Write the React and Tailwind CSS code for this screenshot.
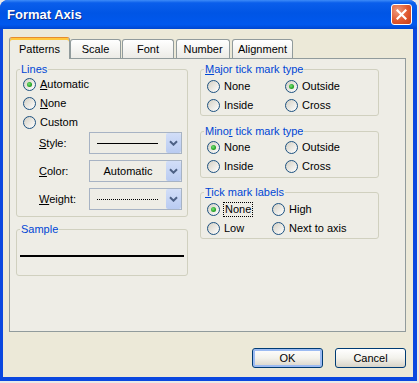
import React from 'react';

const PANEL = 'bg-[#EEEDE6]';

function Radio({ checked, children, focus }) {
  return (
    <div className="flex items-center h-[19px]">
      <span className="w-[13px] h-[13px] shrink-0 rounded-full border border-[#1C5180] bg-gradient-to-br from-[#D4D0C4] to-white flex items-center justify-center">
        {checked && (
          <span className="w-[5px] h-[5px] rounded-full bg-[radial-gradient(circle_at_40%_40%,#7BE07B_0%,#2BAA2B_55%,#167A16_100%)]"></span>
        )}
      </span>
      {focus ? (
        <span className="ml-[3px] px-[1px] border border-dotted border-black leading-[13px]">{children}</span>
      ) : (
        <span className="ml-[4px] leading-[13px]">{children}</span>
      )}
    </div>
  );
}

function Group({ label, className, children }) {
  return (
    <div className={`relative border border-[#D0D0BF] rounded-[3px] ${className}`}>
      <span className={`absolute left-[3px] -top-[7px] px-[1px] leading-[13px] text-[#0046D5] ${PANEL}`}>{label}</span>
      {children}
    </div>
  );
}

function Combo({ children }) {
  return (
    <div className="w-[93px] h-[22px] border border-[#A7B3C4] flex items-stretch">
      <div className="flex-1 flex items-center">{children}</div>
      <div className="w-[15px] bg-gradient-to-b from-[#D2DEF8] to-[#B9CBF1] rounded-[2px] flex items-center justify-center">
        <svg width="9" height="6" viewBox="0 0 9 6">
          <path d="M1 1.2 L4.5 4.7 L8 1.2" fill="none" stroke="#4D6185" strokeWidth="2" />
        </svg>
      </div>
    </div>
  );
}

function Tab({ children, selected, className }) {
  if (selected) {
    return (
      <div className={`relative z-10 h-[22px] -mb-[1px] border border-b-0 border-[#919B9C] border-t-[#E68B2C] rounded-t-[3px] shadow-[inset_0_2px_0_#FFC73C] ${PANEL} flex items-center justify-center pt-[2px] ${className}`}>
        {children}
      </div>
    );
  }
  return (
    <div className={`h-[19px] border border-b-0 border-[#919B9C] rounded-t-[3px] bg-gradient-to-b from-white to-[#ECEBE6] flex items-center justify-center ${className}`}>
      {children}
    </div>
  );
}

function Button({ children, isDefault }) {
  return (
    <div className={`w-[71px] h-[20px] rounded-[3px] border border-[#003C74] bg-gradient-to-b from-white via-[#F3F2EC] to-[#D8D4C8] flex items-center justify-center ${isDefault ? 'shadow-[inset_0_0_0_2px_#9CBBF2]' : ''}`}>
      {children}
    </div>
  );
}

export default function App() {
  return (
    <div className="w-[419px] h-[383px] bg-[#E9E9E9] font-['Liberation_Sans',Arial,sans-serif] text-[11px] text-black">
      <div className="w-[417px] h-[381px] rounded-t-[8px] overflow-hidden bg-[#0A47DF] flex flex-col">

        {/* title bar */}
        <div className="h-[29px] shrink-0 flex items-center pl-[7px] pr-[5px] bg-[linear-gradient(180deg,#3D8BF8_0%,#0A5EEB_10%,#0055E5_45%,#0058EE_85%,#0046D0_100%)]">
          <span className="text-white font-bold text-[13px] [text-shadow:1px_1px_#0A2A8C]">Format Axis</span>
          <div className="ml-auto w-[21px] h-[21px] rounded-[3px] border border-white bg-[radial-gradient(circle_at_30%_30%,#EE9A7E_0%,#E0582F_55%,#C83D17_100%)] flex items-center justify-center">
            <svg width="11" height="11" viewBox="0 0 11 11">
              <path d="M1.5 1.5 L9.5 9.5 M9.5 1.5 L1.5 9.5" stroke="white" strokeWidth="2.2" strokeLinecap="square" />
            </svg>
          </div>
        </div>

        {/* body */}
        <div className="flex-1 ml-[3px] mr-[4px] mb-[4px] bg-[#ECE9D8] pt-[8px] pl-[6px] flex flex-col">
          <div className="flex items-end h-[21px]">
            <Tab selected className="w-[61px]">Patterns</Tab>
            <Tab className="w-[51px]">Scale</Tab>
            <Tab className="w-[52px] ml-[1px]">Font</Tab>
            <Tab className="w-[54px] ml-[2px]">Number</Tab>
            <Tab className="w-[61px] ml-[2px]">Alignment</Tab>
          </div>

          <div className={`w-[397px] h-[274px] border border-[#919B9C] ${PANEL} flex gap-[12px] pt-[10px] pl-[6px]`}>
            {/* left column */}
            <div className="w-[172px] flex flex-col">
              <Group label="Lines" className="h-[148px] pt-[5px] pl-[6px]">
                <Radio checked><span className="underline">A</span>utomatic</Radio>
                <Radio><span className="underline">N</span>one</Radio>
                <Radio>Custom</Radio>
                <div className="flex flex-col gap-[6px] -ml-[6px]">
                  <div className="flex items-center">
                    <span className="w-[72px] pl-[22px]"><span className="underline">S</span>tyle:</span>
                    <Combo><div className="ml-[7px] w-[61px] h-[1px] bg-black"></div></Combo>
                  </div>
                  <div className="flex items-center">
                    <span className="w-[72px] pl-[22px]"><span className="underline">C</span>olor:</span>
                    <Combo><span className="w-full text-center">Automatic</span></Combo>
                  </div>
                  <div className="flex items-center">
                    <span className="w-[72px] pl-[22px]"><span className="underline">W</span>eight:</span>
                    <Combo><div className="ml-[7px] w-[61px] border-t border-dotted border-black"></div></Combo>
                  </div>
                </div>
              </Group>

              <Group label="Sample" className="mt-[12px] h-[47px] pt-[25px]">
                <div className="ml-[3px] w-[164px] h-[2px] bg-black"></div>
              </Group>
            </div>

            {/* right column */}
            <div className="w-[179px] flex flex-col">
              <Group label={<><span className="underline">M</span>ajor tick mark type</>} className="h-[47px] pt-[7px] pl-[6px]">
                <div className="grid grid-cols-[78px_1fr]">
                  <Radio>None</Radio>
                  <Radio checked>Outside</Radio>
                  <Radio>Inside</Radio>
                  <Radio>Cross</Radio>
                </div>
              </Group>

              <Group label={<>Mino<span className="underline">r</span> tick mark type</>} className="mt-[15px] h-[47px] pt-[6px] pl-[6px]">
                <div className="grid grid-cols-[78px_1fr]">
                  <Radio checked>None</Radio>
                  <Radio>Outside</Radio>
                  <Radio>Inside</Radio>
                  <Radio>Cross</Radio>
                </div>
              </Group>

              <Group label={<><span className="underline">T</span>ick mark labels</>} className="mt-[14px] h-[47px] pt-[7px] pl-[6px]">
                <div className="grid grid-cols-[65px_1fr]">
                  <Radio checked focus>None</Radio>
                  <Radio>High</Radio>
                  <Radio>Low</Radio>
                  <Radio>Next to axis</Radio>
                </div>
              </Group>
            </div>
          </div>

          <div className="mt-[16px] flex justify-end gap-[12px] pr-[7px]">
            <Button isDefault>OK</Button>
            <Button>Cancel</Button>
          </div>
        </div>
      </div>
    </div>
  );
}
